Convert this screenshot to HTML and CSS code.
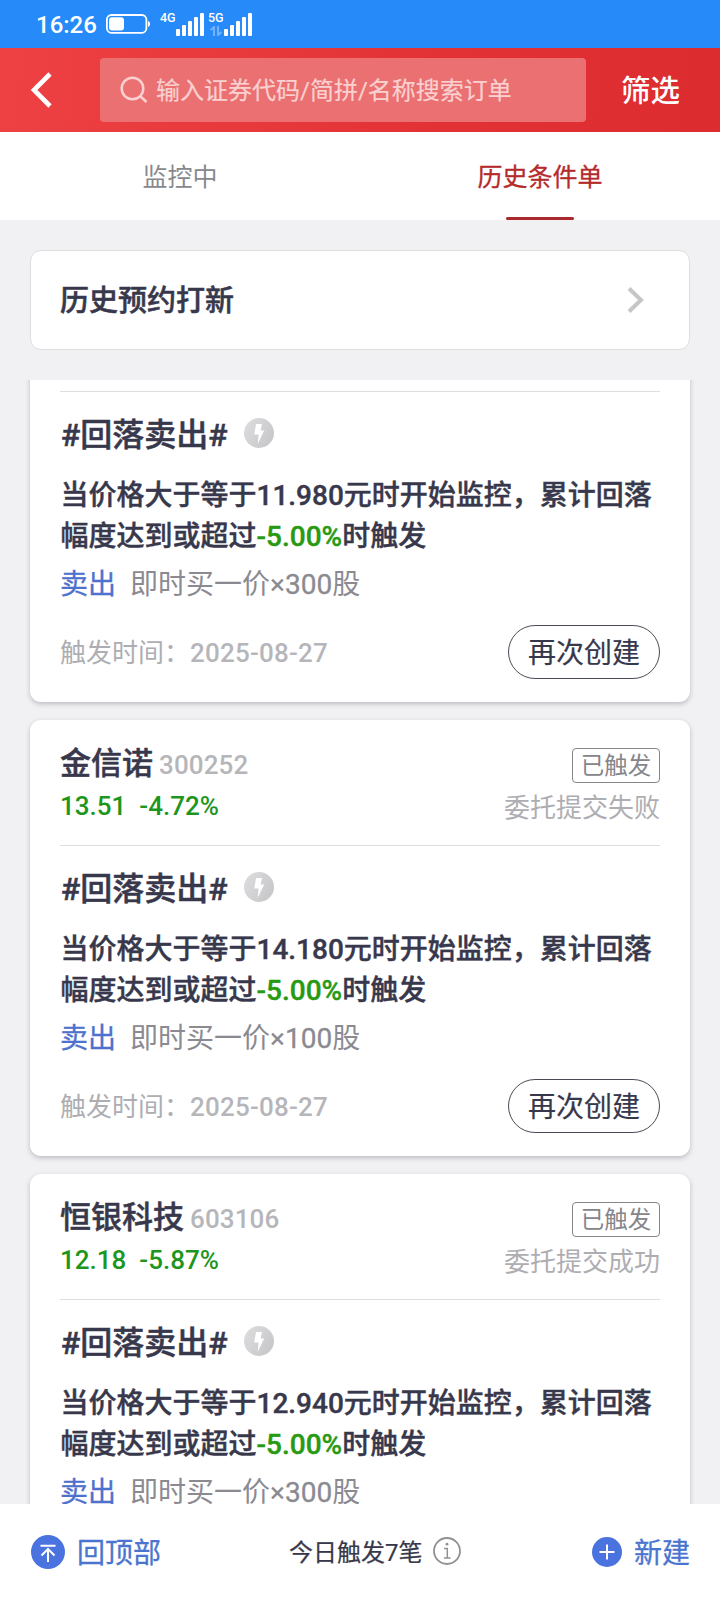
FILE: index.html
```
<!DOCTYPE html>
<html lang="zh-CN">
<head>
<meta charset="utf-8">
<meta name="viewport" content="width=device-width">
<title>历史条件单</title>
<link rel="stylesheet" href="styles.css">
</head>
<body>
<svg class="defs" width="0" height="0" aria-hidden="true">
  <defs>
    <linearGradient id="boltFill" x1="0" y1="0.2" x2="1" y2="0.8">
      <stop offset="0" stop-color="#dcdbdd"/>
      <stop offset="1" stop-color="#c6c5c7"/>
    </linearGradient>
    <symbol id="bolt" viewBox="0 0 30 30">
      <circle cx="15" cy="15" r="15" fill="url(#boltFill)"/>
      <path d="M12 6h6l-1.400 6.500h3.600L13.600 26l1-9.500H10.200z" fill="#fff"/>
    </symbol>
  </defs>
</svg>
<div class="screen">
  <div class="status">
    <span class="clock">16:26</span>
    <svg class="battery" width="46" height="22" viewBox="0 0 46 22">
      <rect x="1.900" y="2" width="39.500" height="17.800" rx="4.500" fill="none" stroke="#fff" stroke-width="1.800"/>
      <rect x="4" y="4.200" width="15" height="13.400" rx="3" fill="#fff"/>
      <path d="M43 8.300c1.500.3 2 1 2 2.700s-.5 2.400-2 2.700z" fill="#fff"/>
    </svg>
    <div class="net">
      <span class="gen">4G</span>
    </div>
    <svg class="bars" width="29" height="24" viewBox="0 0 29 24" fill="#fff">
      <rect x="0" y="17" width="4" height="7" rx="1"/><rect x="6" y="13" width="4" height="11" rx="1"/><rect x="12" y="9" width="4" height="15" rx="1"/><rect x="18" y="5" width="4" height="19" rx="1"/><rect x="24" y="1" width="4" height="23" rx="1"/>
    </svg>
    <div class="net net-5g">
      <span class="gen">5G</span>
      <svg width="12" height="10" viewBox="0 0 12 10" fill="none" stroke="#74b2fb" stroke-width="2"><path d="M0.600 4L4 1v9M11.400 6L8 9V0"/></svg>
    </div>
    <svg class="bars" width="29" height="24" viewBox="0 0 29 24" fill="#fff">
      <rect x="0" y="17" width="4" height="7" rx="1"/><rect x="6" y="13" width="4" height="11" rx="1"/><rect x="12" y="9" width="4" height="15" rx="1"/><rect x="18" y="5" width="4" height="19" rx="1"/><rect x="24" y="1" width="4" height="23" rx="1"/>
    </svg>
  </div>

  <header class="topbar">
    <svg class="back" width="24" height="36" viewBox="0 0 24 36"><path d="M21 2L5 18l16 16" fill="none" stroke="#fff" stroke-width="4.600"/></svg>
    <div class="search">
      <svg width="28" height="28" viewBox="0 0 28 28" fill="none" stroke="#fad0d0" stroke-width="2.500"><circle cx="12.500" cy="12.500" r="10.800"/><path d="M20 20l6.500 6"/></svg>
      <span>输入证券代码/简拼/名称搜索订单</span>
    </div>
    <span class="filter">筛选</span>
  </header>

  <nav class="tabs">
    <div class="tab"><span>监控中</span></div>
    <div class="tab active"><span>历史条件单</span></div>
  </nav>

  <div class="entry">
    <span>历史预约打新</span>
    <svg width="18" height="28" viewBox="0 0 18 28"><path d="M2 2.500L14 14 2 25.500" fill="none" stroke="#c6c6c8" stroke-width="4"/></svg>
  </div>

  <main class="list">
    <article class="card first">
      <div class="head"></div>
      <h2 class="kind">#回落卖出#<svg width="30" height="30"><use href="#bolt"/></svg></h2>
      <p class="rule">当价格大于等于11.980元时开始监控，累计回落<br>幅度达到或超过<b class="drop">-5.00%</b>时触发</p>
      <div class="order"><span class="side">卖出</span><span>即时买一价×<span class="num">300</span>股</span></div>
      <div class="foot"><span class="when">触发时间：<span class="date">2025-08-27</span></span><span class="again">再次创建</span></div>
    </article>

    <article class="card">
      <div class="head">
        <div class="row"><span class="name">金信诺</span><span class="code">300252</span><span class="badge">已触发</span></div>
        <div class="row quote"><span>13.51</span><span>-4.72%</span><span class="result">委托提交失败</span></div>
      </div>
      <h2 class="kind">#回落卖出#<svg width="30" height="30"><use href="#bolt"/></svg></h2>
      <p class="rule">当价格大于等于14.180元时开始监控，累计回落<br>幅度达到或超过<b class="drop">-5.00%</b>时触发</p>
      <div class="order"><span class="side">卖出</span><span>即时买一价×<span class="num">100</span>股</span></div>
      <div class="foot"><span class="when">触发时间：<span class="date">2025-08-27</span></span><span class="again">再次创建</span></div>
    </article>

    <article class="card">
      <div class="head">
        <div class="row"><span class="name">恒银科技</span><span class="code">603106</span><span class="badge">已触发</span></div>
        <div class="row quote"><span>12.18</span><span>-5.87%</span><span class="result">委托提交成功</span></div>
      </div>
      <h2 class="kind">#回落卖出#<svg width="30" height="30"><use href="#bolt"/></svg></h2>
      <p class="rule">当价格大于等于12.940元时开始监控，累计回落<br>幅度达到或超过<b class="drop">-5.00%</b>时触发</p>
      <div class="order"><span class="side">卖出</span><span>即时买一价×<span class="num">300</span>股</span></div>
    </article>
  </main>

  <footer class="bottom">
    <div class="action">
      <svg width="34" height="34" viewBox="0 0 34 34"><circle cx="17" cy="17" r="17" fill="#4a73df"/><path d="M9.500 10.800h15M17 27V14.500M10.500 20.500L17 14l6.500 6.500" fill="none" stroke="#fff" stroke-width="2"/></svg>
      <span>回顶部</span>
    </div>
    <div class="today">
      <span>今日触发7笔</span>
      <svg width="28" height="28" viewBox="0 0 28 28" fill="none" stroke="#919193"><circle cx="14" cy="14" r="13" stroke-width="1.800"/><path d="M11 11.500h3.300v9.200M11 21h6.500" stroke-width="1.500"/><circle cx="14" cy="7.200" r="1.400" fill="#919193" stroke="none"/></svg>
    </div>
    <div class="action create">
      <svg width="30" height="30" viewBox="0 0 30 30"><circle cx="15" cy="15" r="15" fill="#4a73df"/><path d="M7.500 15h15M15 7.500v15" stroke="#fff" stroke-width="2"/></svg>
      <span>新建</span>
    </div>
  </footer>
</div>
</body>
</html>
```
FILE: styles.css
```
* { box-sizing: border-box; }
body {
  margin: 0;
  font-family: Roboto, "Noto Sans CJK SC", sans-serif;
  line-height: 40px;
  color: #38384c;
  background: #f1f0f3;
}
svg { display: block; flex: none; }
.defs { position: absolute; }
.screen {
  width: 720px;
  height: 1600px;
  display: flex;
  flex-direction: column;
  overflow: hidden;
  white-space: nowrap;
}

/* status bar */
.status {
  flex: none;
  height: 48px;
  padding-left: 36px;
  display: flex;
  align-items: flex-start;
  background: #268af9;
  color: #fff;
}
.clock { width: 69px; font-size: 24px; font-weight: 500; line-height: 50px; }
.battery { margin-top: 13px; }
.net { width: 16px; margin-left: 9px; padding-top: 11px; }
.net-5g { width: 16px; margin-left: 3px; }
.net svg { margin: 2px 0 0 2px; }
.gen { display: block; font-size: 12.500px; font-weight: 500; line-height: 13px; }
.bars { margin-top: 12px; }

/* search header */
.topbar {
  flex: none;
  height: 84px;
  display: flex;
  align-items: center;
  padding-left: 29px;
  background: linear-gradient(95deg, #ee4143, #e23235 60%, #dc2c2f);
  color: #fff;
}
.search {
  width: 486px;
  height: 64px;
  margin-left: 47px;
  padding-left: 20px;
  display: flex;
  align-items: center;
  gap: 8px;
  border-radius: 4px;
  background: #eb7072;
  color: #fad0d0;
  font-size: 24px;
}
.search span { padding-top: 2px; -webkit-text-stroke: .2px; }
.filter { margin: 2px 0 0 35px; font-size: 29.500px; font-weight: 500; }

/* tabs */
.tabs { flex: none; height: 88px; display: flex; background: #fff; }
.tab {
  flex: 1;
  display: flex;
  flex-direction: column;
  align-items: center;
  font-size: 25px;
  line-height: 92px;
  color: #87898e;
}
.active { color: #b52a2b; }
.active span { -webkit-text-stroke: .3px; }
.active::after {
  content: "";
  width: 68px;
  height: 3px;
  margin-top: -7px;
  border-radius: 2px;
  background: #aa292f;
}

.entry {
  flex: none;
  height: 100px;
  margin: 30px 30px 30px;
  padding: 0 44px 0 29px;
  display: flex;
  align-items: center;
  justify-content: space-between;
  border: 1px solid #dedde0;
  border-radius: 11px;
  background: #fff;
  font-size: 29px;
  font-weight: 500;
  -webkit-text-stroke: .5px;
}
.entry span { padding-top: 2px; }

/* order cards */
.list {
  flex: none;
  height: 1124px;
  padding: 0 30px;
  display: flex;
  flex-direction: column;
  gap: 18px;
  overflow: hidden;
}
.card {
  flex: none;
  height: 436px;
  padding: 24px 30px 23px;
  border-radius: 11px;
  background: #fff;
  box-shadow: 0 2px 5px rgba(60, 55, 70, .28);
}
.first { margin-top: -114px; }
.head { height: 102px; border-bottom: 1px solid #dedee0; }
.row { height: 40px; display: flex; align-items: center; }
.name { font-size: 31px; font-weight: 500; -webkit-text-stroke: .5px; }
.code { margin: 2px 0 0 6px; font-size: 26px; font-weight: 500; letter-spacing: .1px; color: #b6b6ba; }
.badge {
  width: 88px;
  height: 35px;
  margin: 2px 0 0 auto;
  border: 1px solid #85858a;
  border-radius: 4px;
  font-size: 23.500px;
  line-height: 34px;
  text-align: center;
  color: #85858a;
}
.quote { height: 44px; gap: 13px; font-size: 26px; font-weight: 500; color: #1d9620; }
.result { margin: 4px 0 0 auto; font-weight: 400; color: #aeaeb2; }
.kind {
  height: 40px;
  margin: 21px 0 22px;
  display: flex;
  align-items: center;
  gap: 16px;
  font-size: 32px;
  font-weight: 500;
  line-height: 40px;
  padding: 3px 0 0 1px;
  -webkit-text-stroke: .5px;
}
.kind svg { margin-top: -3px; }
.rule {
  margin: 0 -10px 7px 0;
  padding-left: .5px;
  font-size: 28px;
  font-weight: 500;
  line-height: 41px;
  -webkit-text-stroke: .4px;
}
.drop { font-weight: 500; color: #279a12; }
.order { height: 40px; display: flex; gap: 14px; font-size: 28px; line-height: 42px; color: #8a8a90; }
.num { -webkit-text-stroke: .3px; }
.side { color: #4e71cd; -webkit-text-stroke: .3px; }
.foot { margin-top: 21px; display: flex; align-items: center; justify-content: space-between; }
.when { padding-top: 2px; font-size: 26px; color: #aeaeb2; }
.date { font-weight: 500; letter-spacing: .2px; color: #b6b6ba; }
.again {
  width: 152px;
  height: 54px;
  border: 1px solid #4a4a55;
  border-radius: 27px;
  font-size: 28px;
  line-height: 55px;
  text-align: center;
  -webkit-text-stroke: .2px;
}

/* bottom bar */
.bottom {
  flex: none;
  height: 96px;
  padding: 0 30px 0 31px;
  display: flex;
  align-items: center;
  background: #fff;
}
.action { display: flex; align-items: center; gap: 12px; font-size: 28px; color: #4a75cf; -webkit-text-stroke: .3px; }
.action span { padding-top: 3px; }
.today { display: flex; align-items: center; gap: 10px; margin-left: 128px; font-size: 24px; -webkit-text-stroke: .2px; }
.today span { padding-top: 2px; }
.today svg { margin-top: -2px; }
.create { margin-left: auto; }
```
